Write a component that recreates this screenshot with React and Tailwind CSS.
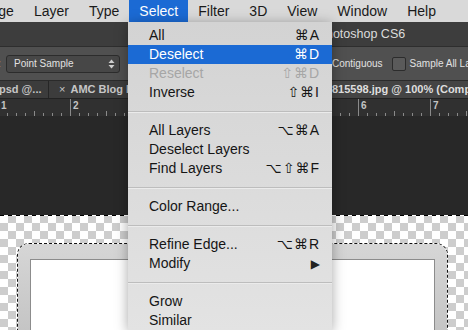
const menuBar = ["Image", "Layer", "Type", "Select", "Filter", "3D", "View", "Window", "Help"];

const items = [
  { label: "All", keys: "⌘A" },
  { label: "Deselect", keys: "⌘D", active: true },
  { label: "Reselect", keys: "⇧⌘D", disabled: true },
  { label: "Inverse", keys: "⇧⌘I" },
  "sep",
  { label: "All Layers", keys: "⌥⌘A" },
  { label: "Deselect Layers" },
  { label: "Find Layers", keys: "⌥⇧⌘F" },
  "sep",
  { label: "Color Range..." },
  "sep",
  { label: "Refine Edge...", keys: "⌥⌘R" },
  { label: "Modify", sub: true },
  "sep",
  { label: "Grow" },
  { label: "Similar" },
];

function Ruler() {
  const ticks = [];
  for (let x = -2; x < 468; x += 9) {
    const step = Math.round((x + 2) / 9) % 8;
    const h = step === 0 ? 18 : step === 4 ? 6 : 4;
    ticks.push(<line key={x} x1={x + 0.5} x2={x + 0.5} y1={18 - h} y2={18} stroke="#8a8a8a" strokeWidth="1" />);
  }
  const nums = [1, 2, 3, 4, 5, 6, 7];
  return (
    <svg width="468" height="18" className="block">
      {ticks}
      {nums.map((n, i) => (
        <text key={n} x={-2 + i * 72 + 3} y="10" fill="#c4c4c4" fontSize="10" fontWeight="bold" fontFamily="Liberation Sans, sans-serif">
          {n}
        </text>
      ))}
    </svg>
  );
}

function SelectMenu() {
  return (
    <div className="absolute left-[128px] top-[22px] w-[204px] h-[308px] pt-[4px] bg-gradient-to-b from-[#d3d3d3] to-[#e3e3e3] shadow-[0_2px_12px_rgba(0,0,0,0.35)]">
      {items.map((it, i) =>
        it === "sep" ? (
          <div key={i} className="h-[19px] flex flex-col justify-center">
            <div className="border-t border-[#bdbdbd] border-b border-b-[#ebebeb]" />
          </div>
        ) : (
          <div
            key={i}
            className={
              "h-[19px] flex items-center justify-between pl-[21px] pr-[12px] text-[14px] " +
              (it.active ? "bg-[#1b6ad4] text-white" : it.disabled ? "text-[#a6a6a6]" : "text-[#151515]")
            }
          >
            <span>{it.label}</span>
            {it.keys && <span className="tracking-[1px] font-['Liberation_Sans','DejaVu_Sans',sans-serif]">{it.keys}</span>}
            {it.sub && <span className="text-[12px] text-[#222]">▶</span>}
          </div>
        )
      )}
    </div>
  );
}

export default function App() {
  return (
    <div className="relative w-[468px] h-[330px] overflow-hidden bg-[#282828] font-['Liberation_Sans','DejaVu_Sans',sans-serif] flex flex-col">
      <div className="h-[22px] shrink-0 bg-[#d9d9d9] flex items-center text-[14px] text-[#1a1a1a] -ml-[35px]">
        {menuBar.map((m) => (
          <div
            key={m}
            className={"h-full flex items-center px-[10px] " + (m === "Select" ? "bg-[#1b6ad4] text-white" : "")}
          >
            {m}
          </div>
        ))}
      </div>

      <div className="h-[24px] shrink-0 bg-[#3d3d3d] flex items-center pl-[278px] text-[12.5px] text-[#dcdcdc] whitespace-nowrap">
        Adobe Photoshop CS6
      </div>

      <div className="h-[34px] shrink-0 bg-[#505050] border-t border-[#2e2e2e] flex items-center text-[10px] text-[#e2e2e2] whitespace-nowrap overflow-hidden">
        <span className="shrink-0 w-[8px] -ml-[2px]">:</span>
        <div className="shrink-0 w-[114px] h-[18px] rounded-[3px] border border-[#2c2c2c] bg-[#474747] flex items-center justify-between pl-[7px] pr-[4px]">
          <span>Point Sample</span>
          <svg width="7" height="10" viewBox="0 0 7 10">
            <path d="M3.5 0.5 L6.5 4 L0.5 4 Z" fill="#d0d0d0" />
            <path d="M3.5 9.5 L6.5 6 L0.5 6 Z" fill="#d0d0d0" />
          </svg>
        </div>
        <div className="shrink-0 ml-[212px] flex items-center">
          <span>Contiguous</span>
          <div className="shrink-0 ml-[9px] w-[14px] h-[14px] rounded-[2px] border border-[#2c2c2c] bg-[#5a5a5a]" />
          <span className="ml-[4px]">Sample All Layers</span>
        </div>
      </div>

      <div className="h-[18px] shrink-0 bg-[#3c3c3c] border-t border-[#2a2a2a] flex text-[11px] font-bold text-[#c6c6c6] whitespace-nowrap">
        <div className="w-[49px] shrink-0 border-r border-[#262626] flex items-center overflow-hidden">
          <span className="-ml-[1px]">psd @...</span>
        </div>
        <div className="w-[250px] shrink-0 border-r border-[#262626] flex items-center pl-[10px] overflow-hidden">
          <span className="mr-[5px] font-normal">×</span>
          <span>AMC Blog Post.psd @ 66.7%</span>
        </div>
        <div className="flex-1 bg-[#444444] flex items-center pl-[33px] text-[#dedede] overflow-hidden">
          815598.jpg @ 100% (Composite/8)
        </div>
      </div>

      <div className="h-[18px] shrink-0 bg-[#303030] border-t border-[#222]">
        <Ruler />
      </div>

      <div className="h-[99px] shrink-0 bg-[#282828]" />

      <div className="flex-1 bg-[conic-gradient(#cdcdcd_90deg,#ffffff_90deg_180deg,#cdcdcd_180deg_270deg,#ffffff_270deg)] bg-[length:16px_16px]">
        <div className="h-px bg-[repeating-linear-gradient(90deg,#000_0_4px,#fff_4px_8px)]" />
        <div className="pt-[27px] pl-[17px]">
          <div className="w-[431px] h-[100px] rounded-t-[12px] border border-b-0 border-dashed border-[#111] bg-white">
            <div className="h-full rounded-t-[11px] bg-gradient-to-b from-[#d6d6d6] to-[#c2c2c2] pt-[15px] px-[12px]">
              <div className="h-full bg-white border border-b-0 border-[#8c8c8c]" />
            </div>
          </div>
        </div>
      </div>

      <SelectMenu />
    </div>
  );
}
